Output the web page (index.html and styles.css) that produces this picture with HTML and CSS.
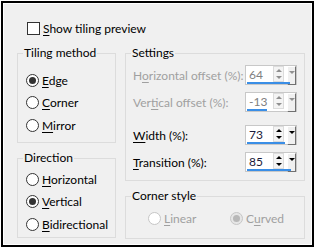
FILE: index.html
```html
<!DOCTYPE html>
<html lang="en">
<head>
  <meta charset="UTF-8" />
  <title>Tiling</title>
  <link rel="stylesheet" href="styles.css">
</head>
<body>
  <div class="frame">
    <div class="dialog">
      <label class="check-row">
        <span class="checkbox"></span>
        <span><u>S</u>how tiling preview</span>
      </label>

      <div class="columns">
        <div class="col col-left">
          <fieldset class="group group-method">
            <legend>Tiling method</legend>
            <div class="radio-row"><span class="radio checked"></span><span><u>E</u>dge</span></div>
            <div class="radio-row"><span class="radio"></span><span><u>C</u>orner</span></div>
            <div class="radio-row"><span class="radio"></span><span><u>M</u>irror</span></div>
          </fieldset>

          <fieldset class="group group-direction">
            <legend>Direction</legend>
            <div class="radio-row"><span class="radio"></span><span><u>H</u>orizontal</span></div>
            <div class="radio-row"><span class="radio checked"></span><span><u>V</u>ertical</span></div>
            <div class="radio-row"><span class="radio"></span><span><u>B</u>idirectional</span></div>
          </fieldset>
        </div>

        <div class="col col-right">
          <fieldset class="group group-settings">
            <legend>Settings</legend>
            <div class="field-row disabled">
              <span class="field-label">H<u>o</u>rizontal offset (%):</span>
              <div class="spin">
                <div class="spin-top">
                  <span class="spin-val">64</span>
                  <span class="spin-ud"><i class="up"></i><i class="down"></i></span>
                  <span class="spin-drop"><i class="down"></i></span>
                </div>
                <div class="spin-bar" style="width: 43px"></div>
              </div>
            </div>
            <div class="field-row disabled">
              <span class="field-label">Ver<u>t</u>ical offset (%):</span>
              <div class="spin">
                <div class="spin-top">
                  <span class="spin-val">-13</span>
                  <span class="spin-ud"><i class="up"></i><i class="down"></i></span>
                  <span class="spin-drop"><i class="down"></i></span>
                </div>
                <div class="spin-bar" style="width: 20px"></div>
              </div>
            </div>
            <div class="field-row gap-top">
              <span class="field-label"><u>W</u>idth (%):</span>
              <div class="spin">
                <div class="spin-top">
                  <span class="spin-val">73</span>
                  <span class="spin-ud"><i class="up"></i><i class="down"></i></span>
                  <span class="spin-drop"><i class="down"></i></span>
                </div>
                <div class="spin-bar" style="width: 38px"></div>
              </div>
            </div>
            <div class="field-row">
              <span class="field-label"><u>T</u>ransition (%):</span>
              <div class="spin">
                <div class="spin-top">
                  <span class="spin-val">85</span>
                  <span class="spin-ud"><i class="up"></i><i class="down"></i></span>
                  <span class="spin-drop"><i class="down"></i></span>
                </div>
                <div class="spin-bar" style="width: 44px"></div>
              </div>
            </div>
          </fieldset>

          <fieldset class="group group-corner">
            <legend>Corner style</legend>
            <div class="corner-row disabled">
              <div class="radio-row linear"><span class="radio"></span><span><u>L</u>inear</span></div>
              <div class="radio-row"><span class="radio checked"></span><span>C<u>u</u>rved</span></div>
            </div>
          </fieldset>
        </div>
      </div>
    </div>
  </div>
</body>
</html>
```

FILE: styles.css
```css
body {
  margin: 0;
  background: #fff;
  font-family: Lato, "Noto Sans", sans-serif;
  font-size: 12px;
  color: #000;
}

.frame {
  margin: 1px 0 0 1px;
  width: 313px;
  height: 246px;
  box-sizing: border-box;
  border: 2px solid #000;
}

.dialog {
  height: 100%;
  box-sizing: border-box;
  border: 1px solid #fff;
  background: #f0f0f0;
  padding: 17px 5px 0 13px;
}

u {
  text-decoration-thickness: 1px;
  text-underline-offset: 2px;
}

/* checkbox */
.check-row {
  display: flex;
  align-items: center;
  gap: 3px;
  height: 15px;
  margin-left: 10px;
}

.checkbox {
  width: 13px;
  height: 13px;
  box-sizing: border-box;
  border: 1px solid #333;
  background: #fff;
}

/* layout */
.columns {
  display: flex;
  gap: 9px;
  margin-top: 9px;
}

.col {
  display: flex;
  flex-direction: column;
  gap: 7px;
}

.col-left { width: 99px; }
.col-right { width: 180px; }

.group {
  margin: 0;
  padding: 0;
  border: 1px solid #dcdcdc;
  box-sizing: border-box;
  min-width: 0;
}

.group legend {
  padding: 0 1px;
  line-height: 16px;
}

.group-method { height: 98px; padding: 8px 0 0 8px; }
.group-direction { height: 88px; padding: 2px 0 0 8px; }
.group-settings { height: 136px; padding: 4px 0 0 7px; }
.group-corner { height: 51px; padding: 3px 0 0 22px; }

.group-method legend,
.group-direction legend { margin-left: -3px; }
.group-settings legend { margin-left: -2px; }
.group-corner legend { margin-left: -17px; }

/* radios */
.radio-row {
  display: flex;
  align-items: center;
  gap: 3px;
  height: 22.5px;
}

.radio {
  width: 13px;
  height: 13px;
  box-sizing: border-box;
  border: 1px solid #333;
  border-radius: 50%;
  background: #fff;
  display: flex;
  align-items: center;
  justify-content: center;
}

.radio.checked::after {
  content: "";
  width: 7px;
  height: 7px;
  border-radius: 50%;
  background: #333;
}

.corner-row {
  display: flex;
}

.corner-row .linear { width: 82px; }

.disabled { color: #a0a0a0; }
.disabled .radio { border-color: #c6c6c6; }
.disabled .radio.checked { background: #e6e6e6; }
.disabled .radio.checked::after { background: #b8b8b8; }

/* settings rows */
.field-row {
  display: flex;
  align-items: flex-start;
  height: 27px;
}

.field-row.gap-top { margin-top: 6px; }

.field-label {
  width: 112px;
  padding-top: 3px;
}

.spin {
  width: 52px;
  height: 20px;
  box-sizing: border-box;
  border: 1px solid #c8c8c8;
  background: #fff;
  display: flex;
  flex-direction: column;
}

.spin-top {
  display: flex;
  height: 16px;
}

.spin-val {
  flex: 1;
  padding: 1px 0 0 3px;
  line-height: 15px;
  color: #1a1a3a;
}

.disabled .spin-val { color: #808080; }

.spin-ud {
  width: 9px;
  display: flex;
  flex-direction: column;
  margin-right: 3px;
  border: 1px solid #dcdcdc;
  background: #f4f4f4;
}

.spin-ud i, .spin-drop i {
  flex: 1;
  display: flex;
  align-items: center;
  justify-content: center;
}

.up::after, .down::after {
  content: "";
  border-left: 3px solid transparent;
  border-right: 3px solid transparent;
}

.up::after { border-bottom: 3px solid #000; }
.down::after { border-top: 3px solid #000; }

.disabled .up::after { border-bottom-color: #909090; }
.disabled .down::after { border-top-color: #909090; }

.spin-drop {
  width: 7px;
  height: 17px;
  display: flex;
  flex-direction: column;
  border: 1px solid;
  border-color: #fff #707070 #707070 #fff;
  background: #f0f0f0;
}

.spin-drop i { flex: 0 0 10px; }

.spin-bar {
  height: 3px;
  background: #3a8ee6;
  margin-left: 1px;
}
```
